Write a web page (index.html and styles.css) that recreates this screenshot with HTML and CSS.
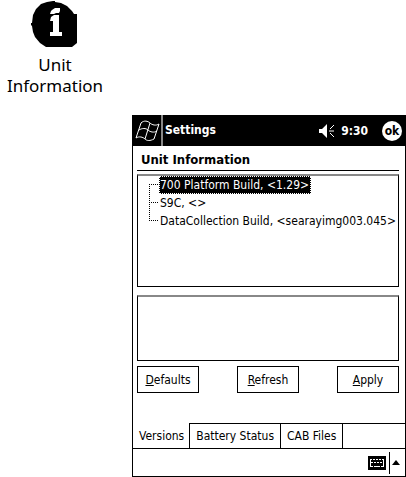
FILE: index.html
```html
<!DOCTYPE html>
<html lang="en">
<head>
    <meta charset="UTF-8">
    <meta name="viewport" content="width=device-width, initial-scale=1.0">
    <title>Unit Information</title>
    <link rel="stylesheet" href="styles.css">
</head>
<body>
    <div class="applet">
        <svg class="applet-icon" viewBox="0 0 48 46" width="48" height="46">
            <path d="M15 46l-6-4-5-6-2-5-1-6-1-1v-2h1l1-8 3-6 5-5 6-2 6-1V0h2v1l6 1 6 3 5 5 2 3h3v29l-5 4z" fill="#000"/>
            <path d="M21 9l3-2h5v3l-1 2h-3l-2 1h-4l1-3zM20 16l3-2h5v17h3v4H19v-4h3V20h-3z" fill="#fff"/>
        </svg>
        <div class="applet-name">Unit Information</div>
    </div>

    <div class="window">
        <div class="title-bar">
            <svg class="flag" viewBox="0 0 26 24" width="26" height="24" fill="none" stroke="#fff">
                <path d="M6 4c3-3 7-2 9 0 2 2 6 3 9 1l-5 15c-4 2-7 2-9 0-2-2-6-3-9-1z"/>
                <path d="M15 4l-5 16M4 11c3-2 7-2 9 0 2 2 6 3 9 1"/>
            </svg>
            <span class="title">Settings</span>
            <svg class="speaker" viewBox="0 0 17 14" width="17" height="14">
                <path d="M0 5h3l5-5v14L3 9H0z" fill="#fff"/>
                <path d="M11 5l4-4M10 7h5M11 9l4 4" stroke="#fff" fill="none"/>
            </svg>
            <span class="clock">9:30</span>
            <button class="ok-button">ok</button>
        </div>

        <div class="content">
            <h1>Unit Information</h1>
            <ul class="box tree">
                <li><span class="selected">700 Platform Build, &lt;1.29&gt;</span></li>
                <li><span>S9C, &lt;&gt;</span></li>
                <li><span>DataCollection Build, &lt;searayimg003.045&gt;</span></li>
            </ul>
            <div class="box details"></div>
            <div class="buttons">
                <button><u>D</u>efaults</button>
                <button><u>R</u>efresh</button>
                <button><u>A</u>pply</button>
            </div>
        </div>

        <div class="tabs">
            <button class="tab active">Versions</button>
            <button class="tab">Battery Status</button>
            <button class="tab">CAB Files</button>
            <span class="tab-rest"></span>
        </div>

        <div class="menu-bar">
            <button class="keyboard" aria-label="Keyboard">
                <svg viewBox="0 0 18 14" width="18" height="14">
                    <path d="M0 0h18v14H0z" fill="#000"/>
                    <path d="M2 3.5h14M3 6.5h13" stroke="#fff" stroke-dasharray="2 1"/>
                    <path d="M2.5 3v8M15.5 3v8M2 10.5h3M6 10.5h6M13 10.5h3" stroke="#fff"/>
                </svg>
            </button>
            <button class="arrow" aria-label="Input options">
                <svg viewBox="0 0 8 5" width="8" height="5"><path d="M4 0l4 5H0z" fill="#000"/></svg>
            </button>
        </div>
    </div>
</body>
</html>
```

FILE: styles.css
```css
* {
    box-sizing: border-box;
}

body {
    margin: 0;
    background-color: #fff;
    color: #000;
    font-family: "DejaVu Sans Condensed", "DejaVu Sans", sans-serif;
    font-size: 12px;
}

button {
    margin: 0;
    padding: 0;
    border: none;
    background: none;
    color: #000;
    font: inherit;
    white-space: nowrap;
}

svg {
    display: block;
    flex: none;
}

.applet {
    display: flex;
    flex-direction: column;
    align-items: center;
    width: 110px;
    height: 115px;
    padding-top: 1px;
}

.applet-name {
    width: 100px;
    margin-top: 7px;
    font-family: "Noto Sans", sans-serif;
    font-size: 17px;
    line-height: 21px;
    text-align: center;
}

.window {
    margin-left: 132px;
    border: 1px solid #000;
    border-top: none;
}

.title-bar {
    display: flex;
    align-items: center;
    height: 31px;
    padding-right: 3px;
    background-color: #000;
    color: #fff;
    font-weight: bold;
}

.flag {
    margin-left: 2px;
}

.title {
    flex: 1;
    padding-left: 2px;
    border-left: 2px solid #888;
    line-height: 31px;
}

.clock {
    margin: 0 14px 0 5px;
}

.ok-button {
    width: 20px;
    height: 20px;
    border-radius: 50%;
    background-color: #fff;
    font-weight: bold;
    line-height: 18px;
}

.content {
    padding: 4px 6px 30px 4px;
}

h1 {
    margin: 0 0 3px;
    padding-left: 4px;
    border-bottom: 1px solid #000;
    font-size: 13px;
    line-height: 20px;
}

.box {
    border: 1px solid #000;
    border-top: 2px solid #888;
}

.tree {
    height: 113px;
    margin: 0;
    padding: 0 0 0 11px;
    list-style: none;
}

.tree li {
    display: flex;
    height: 18px;
    line-height: 16px;
    white-space: nowrap;
    background: repeating-linear-gradient(#000 0 1px, #fff 1px 2px) 0 0 / 1px 100% no-repeat;
}

.tree li:first-child {
    background-position: 0 8px;
}

.tree li:last-child {
    background-size: 1px 9px;
}

.tree li::before {
    content: "";
    width: 10px;
    height: 1px;
    margin-top: 8px;
    background: repeating-linear-gradient(90deg, #000 0 1px, #fff 1px 2px);
}

.tree span {
    height: 18px;
    border: 1px solid transparent;
}

.tree .selected {
    padding-right: 1px;
    border: 1px dotted #fff;
    background-color: #000;
    color: #fff;
}

.details {
    height: 66px;
    margin-top: 8px;
}

.buttons {
    display: flex;
    justify-content: space-between;
    margin-top: 5px;
}

.buttons button {
    width: 62px;
    height: 27px;
    border: 1px solid #000;
}

.tabs {
    display: flex;
    height: 26px;
}

.tab,
.tab-rest {
    padding: 0 6px;
    border: solid #000;
    border-width: 1px 0 1px 1px;
}

.tab.active {
    padding: 0 5px 0 6px;
    border-color: transparent transparent #000;
    border-left: none;
}

.tab-rest {
    flex: 1;
}

.menu-bar {
    display: flex;
    justify-content: flex-end;
    align-items: center;
    height: 27px;
    padding-right: 5px;
}

.arrow {
    height: 22px;
    margin-left: 3px;
    padding-left: 2px;
    border-left: 1px solid #000;
}
```
